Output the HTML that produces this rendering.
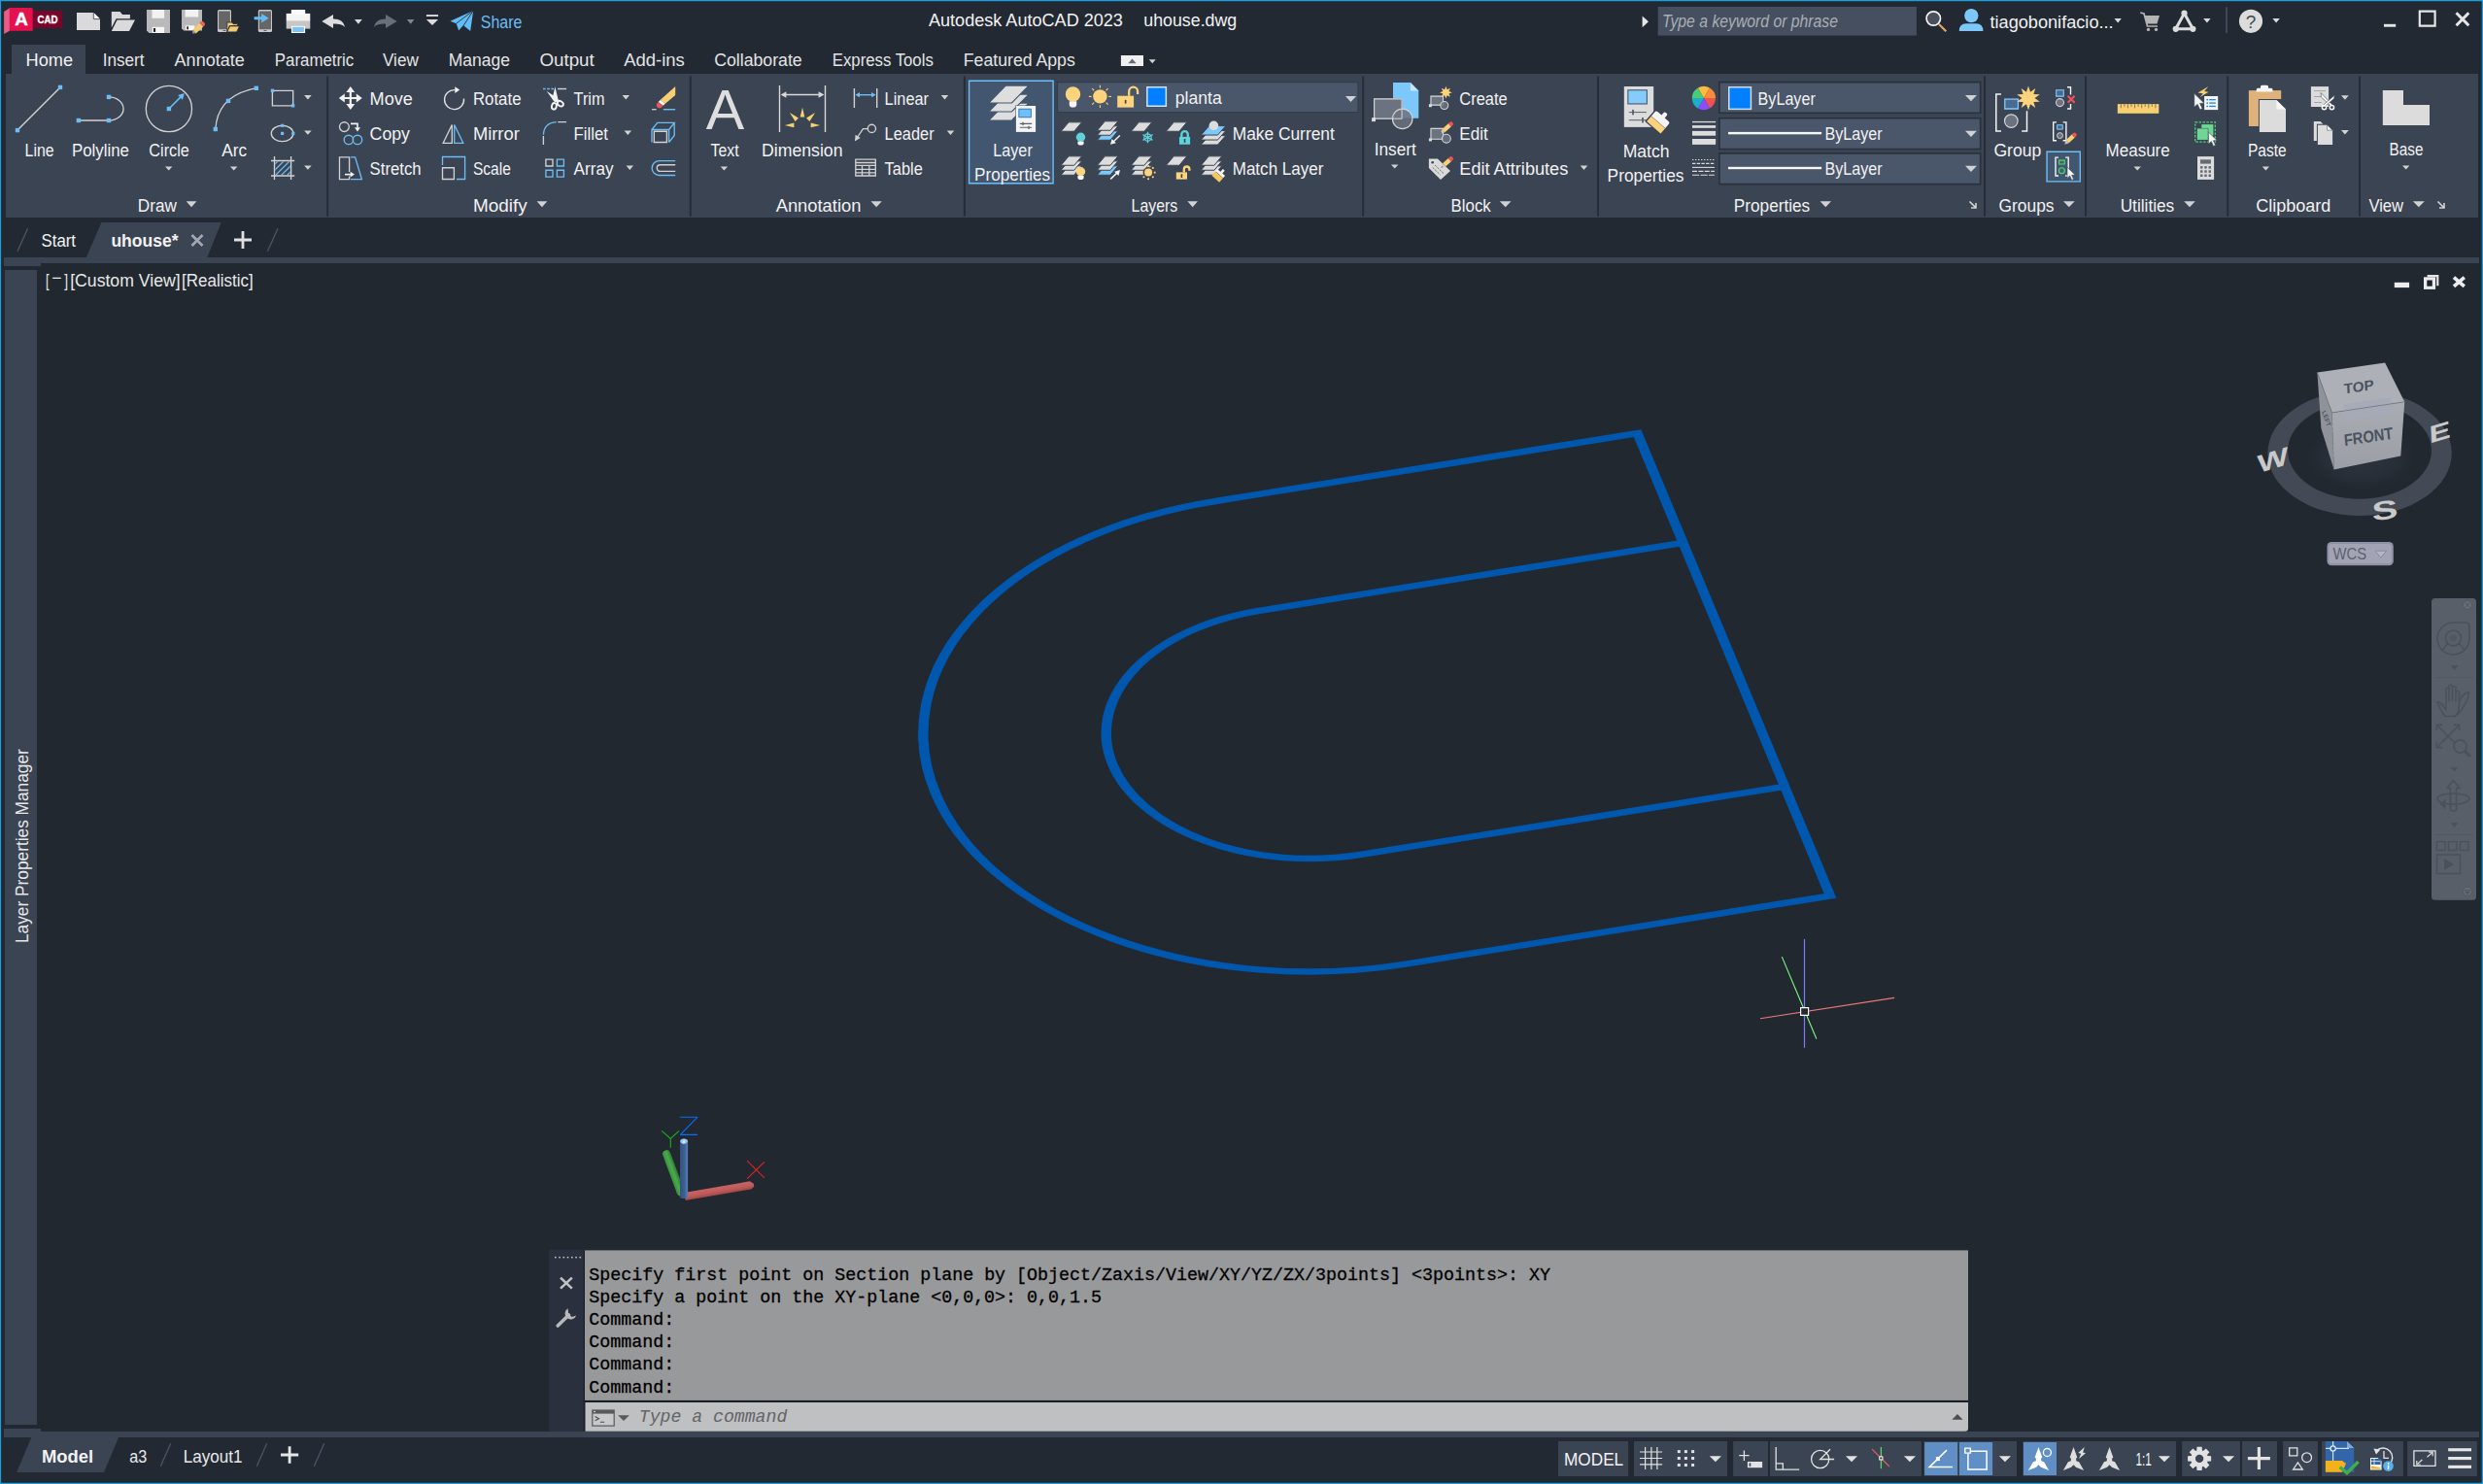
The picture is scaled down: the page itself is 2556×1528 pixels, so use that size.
<!DOCTYPE html>
<html><head><meta charset="utf-8"><title>Autodesk AutoCAD 2023 - uhouse.dwg</title>
<style>
html,body{margin:0;padding:0;background:#222933;width:2556px;height:1528px}
svg{display:block;font-family:"Liberation Sans", sans-serif;}
text{white-space:pre}
</style></head><body>
<svg width="2556" height="1528" viewBox="0 0 2556 1528">
<rect x="0" y="0" width="2556" height="1528" fill="#222933" />
<rect x="0" y="271" width="2556" height="1203" fill="#212830" />
<rect x="12" y="46" width="76" height="31" fill="#3b4453" />
<rect x="6" y="76" width="2545" height="148" fill="#3b4453" />
<rect x="4" y="265" width="2548" height="6" fill="#3b4453" />
<rect x="4" y="265" width="38" height="9" fill="#3b4453" />
<rect x="5" y="278" width="33" height="1189" fill="#3b4453" />
<rect x="4" y="1474" width="2548" height="6" fill="#3b4453" />
<rect x="4" y="1471" width="38" height="9" fill="#3b4453" />
<text x="494.8" y="28.8" font-size="17.5" fill="#6cbdf5" textLength="42.6" lengthAdjust="spacingAndGlyphs" >Share</text>
<text x="956" y="27.3" font-size="17.5" fill="#f2f2f2" textLength="199.9" lengthAdjust="spacingAndGlyphs" >Autodesk AutoCAD 2023</text>
<text x="1177.3" y="27.3" font-size="17.5" fill="#f2f2f2" textLength="95.9" lengthAdjust="spacingAndGlyphs" >uhouse.dwg</text>
<rect x="1706.7" y="7" width="266.2" height="29.6" fill="#464f5f" />
<text x="1711" y="28.2" font-size="17.5" fill="#a9aeb6" textLength="181" lengthAdjust="spacingAndGlyphs" font-style="italic" >Type a keyword or phrase</text>
<text x="2048.5" y="28.5" font-size="17.5" fill="#f2f2f2" textLength="127.1" lengthAdjust="spacingAndGlyphs" >tiagobonifacio...</text>
<path d="M4.1 12.1L9.9 8.2V31.7L4.1 35Z" fill="#ea5b86" />
<path d="M9.9 8H32.3Q33.8 8 33.8 9.5V31.7H9.9Z" fill="#e5114f" />
<rect x="33.8" y="11.1" width="30.2" height="17.7" fill="#79062a" />
<text x="15.3" y="26.4" font-size="18.5" fill="#ffffff" textLength="13.6" lengthAdjust="spacingAndGlyphs" font-weight="bold" stroke="#fff" stroke-width="0.4">A</text>
<text x="38.4" y="23.7" font-size="10.2" fill="#ffffff" textLength="21" lengthAdjust="spacingAndGlyphs" font-weight="bold" stroke="#fff" stroke-width="0.3">CAD</text>
<path d="M79 13H96.3L103 19.6V31H79Z" fill="#dadada" />
<path d="M96.3 13L103 19.6H96.3Z" fill="#f6f6f6" />
<path d="M96.3 13V19.6H103" fill="none" stroke="#222933" stroke-width="0.7" />
<path d="M114.8 12H123.5L126 15H133.9V19.2H119.6L114.8 28.5Z" fill="#dadada" />
<path d="M120.6 20.6H139L133 32H114.8Z" fill="#dadada" />
<path d="M151 10H175V34H153.5L151 31.5Z" fill="#b9b9b9" />
<rect x="156.5" y="10" width="12.6" height="8.8" fill="#f2f2f2" />
<rect x="156.7" y="27.8" width="12.4" height="6.2" fill="#f6f6f6" />
<rect x="158" y="29" width="2.1" height="3.9" fill="#222" />
<path d="M187 10H208V31.5H189.2L187 29.3Z" fill="#b9b9b9" />
<rect x="190.6" y="10" width="13.6" height="7.5" fill="#f2f2f2" />
<rect x="190.9" y="26.3" width="9.5" height="4.8" fill="#f6f6f6" />
<rect x="192.3" y="27.3" width="1.7" height="3" fill="#222" />
<path d="M205.2 23.8L209.2 27.6L202 34.2L198.6 33.6L198.8 30.3Z" fill="#f5ca72" />
<path d="M205.2 23.8L206.8 22.3Q208 21.3 209.5 22.6L210.6 23.8Q211.6 25.2 210.5 26.3L209.2 27.6Z" fill="#f0625c" />
<path d="M198.8 30.3L202 34.2L198 34.6Z" fill="#9a9a9a" />
<path d="M225.5 10H236.5Q238 10 238 11.5V31.5Q238 33 236.5 33H225.5Q224 33 224 31.5V11.5Q224 10 225.5 10Z" fill="#c9c9c9" />
<rect x="225.1" y="11.5" width="11.8" height="18.7" fill="#666666" />
<rect x="229.5" y="31" width="3" height="1" fill="#666" />
<path d="M233.8 23H238.8L240 24.6H244.6V26.6H236.3L233.8 32.9Z" fill="#f5ca72" stroke="#222933" stroke-width="0.8" />
<path d="M236.6 26.9H246.5L243.6 32.9H233.8Z" fill="#f5ca72" stroke="#222933" stroke-width="0.8" />
<path d="M267.3 10H278.5Q280 10 280 11.5V31.5Q280 33 278.5 33H267.3Q265.8 33 265.8 31.5V11.5Q265.8 10 267.3 10Z" fill="#c9c9c9" />
<rect x="266.9" y="11.5" width="12.1" height="18.7" fill="#666666" />
<rect x="271.5" y="31" width="3" height="1" fill="#666" />
<path d="M261.6 17.2H269.2V14L276.8 18.7L269.2 23.4V20.2H261.6Z" fill="#62bdf7" />
<rect x="299.9" y="10" width="14.2" height="7" fill="#fafafa" />
<rect x="294.7" y="13.9" width="24.6" height="8" fill="#f4f4f4" />
<rect x="294.7" y="21.7" width="24.6" height="7.9" fill="#c6c6c6" />
<rect x="299.9" y="10" width="14.2" height="5" fill="#fafafa" />
<rect x="299.9" y="26.8" width="14.2" height="7.2" fill="#fafafa" />
<rect x="301.1" y="27.8" width="11.8" height="5.2" fill="#7cc4f8" />
<path d="M331.3 22.1L343 15.1V19.6Q353 19.3 355.2 27.9Q351 24.3 343 24.6V29Z" fill="#dcdcdc" />
<path d="M365 19.9H372.8L368.9 24.8Z" fill="#dcdcdc" />
<path d="M408.7 22.1L397 15.1V19.6Q387 19.3 384.8 27.9Q389 24.3 397 24.6V29Z" fill="#696e78" />
<path d="M418.9 19.9H426.5L422.7 24.8Z" fill="#80858e" />
<rect x="438.9" y="15.1" width="12.2" height="1.9" fill="#dcdcdc" />
<path d="M438.9 19.9H451.1L445 26.1Z" fill="#dcdcdc" />
<path d="M463.4 21.7L487.2 10.9L484.2 32L477.2 26.3L472.3 31.7L469.7 24.2Z" fill="#62bdf7" />
<path d="M487.2 10.9L469.7 24.2M487.2 10.9L477.2 26.3L472.3 31.7" fill="none" stroke="#222933" stroke-width="0.9" />
<path d="M1690.6 16.4L1697 22.3L1690.6 28.2Z" fill="#e6e6e6" />
<circle cx="1990.3" cy="19" r="7.2" fill="#4a505c" stroke="#f4f4f4" stroke-width="1.7"/>
<path d="M1996 25L2003.3 32.2" fill="none" stroke="#e3a566" stroke-width="2.2" />
<circle cx="2029.3" cy="16.1" r="7.2" fill="#7cc8fb"/>
<path d="M2016.8 31.9Q2016.8 24.2 2024 24.2H2034.4Q2041.4 24.2 2041.4 31.9Z" fill="#7cc8fb" />
<path d="M2176.5 19H2183.9L2180.2 23.4Z" fill="#dcdcdc" />
<path d="M2203.2 13L2207 14L2210.5 27H2221" fill="none" stroke="#b4b4b4" stroke-width="1.7" />
<path d="M2207.6 16H2223L2220.5 24.5H2210Z" fill="#b4b4b4" />
<circle cx="2211.5" cy="30.4" r="1.7" fill="#b4b4b4"/><circle cx="2219.5" cy="30.4" r="1.7" fill="#b4b4b4"/>
<path d="M2248.5 13.7L2239.7 29.8H2257.4Z" fill="none" stroke="#dcdcdc" stroke-width="3" stroke-linejoin="round"/>
<circle cx="2248.5" cy="13.7" r="3.1" fill="#dcdcdc"/>
<circle cx="2239.7" cy="29.8" r="3.1" fill="#dcdcdc"/>
<circle cx="2257.4" cy="29.8" r="3.1" fill="#dcdcdc"/>
<path d="M2268.2 19H2275.6L2271.9 23.4Z" fill="#dcdcdc" />
<rect x="2291" y="7.3" width="2" height="26.6" fill="#3d4759" />
<circle cx="2317" cy="21.8" r="12.1" fill="#dcdcdc"/>
<text x="2317" y="28.6" font-size="19" fill="#444a55" text-anchor="middle" >?</text>
<path d="M2339.4 19H2346.8L2343.1 23.4Z" fill="#dcdcdc" />
<rect x="2454" y="24.8" width="12.2" height="2.9" fill="#e6e6e6" />
<path d="M2490.8 11.7H2506.6V26.6H2490.8Z" fill="none" stroke="#e6e6e6" stroke-width="2.2" />
<path d="M2528.5 13.2L2541.3 26.2M2541.3 13.2L2528.5 26.2" fill="none" stroke="#e6e6e6" stroke-width="3" />
<text x="26.5" y="67.8" font-size="17.5" fill="#f2f2f2" textLength="48.5" lengthAdjust="spacingAndGlyphs" >Home</text>
<text x="105.7" y="67.8" font-size="17.5" fill="#e4e4e4" textLength="42.9" lengthAdjust="spacingAndGlyphs" >Insert</text>
<text x="179.6" y="67.8" font-size="17.5" fill="#e4e4e4" textLength="72.2" lengthAdjust="spacingAndGlyphs" >Annotate</text>
<text x="282.8" y="67.8" font-size="17.5" fill="#e4e4e4" textLength="81.5" lengthAdjust="spacingAndGlyphs" >Parametric</text>
<text x="394" y="67.8" font-size="17.5" fill="#e4e4e4" textLength="36.8" lengthAdjust="spacingAndGlyphs" >View</text>
<text x="461.8" y="67.8" font-size="17.5" fill="#e4e4e4" textLength="63.2" lengthAdjust="spacingAndGlyphs" >Manage</text>
<text x="555.4" y="67.8" font-size="17.5" fill="#e4e4e4" textLength="56.4" lengthAdjust="spacingAndGlyphs" >Output</text>
<text x="642.2" y="67.8" font-size="17.5" fill="#e4e4e4" textLength="62.6" lengthAdjust="spacingAndGlyphs" >Add-ins</text>
<text x="735.2" y="67.8" font-size="17.5" fill="#e4e4e4" textLength="90.5" lengthAdjust="spacingAndGlyphs" >Collaborate</text>
<text x="856.8" y="67.8" font-size="17.5" fill="#e4e4e4" textLength="104" lengthAdjust="spacingAndGlyphs" >Express Tools</text>
<text x="991.8" y="67.8" font-size="17.5" fill="#e4e4e4" textLength="115" lengthAdjust="spacingAndGlyphs" >Featured Apps</text>
<rect x="1153.9" y="57" width="23.1" height="11" fill="#f0f0f0" />
<path d="M1161.3 65.2H1169.7L1165.5 60.4Z" fill="#666b74" />
<path d="M1182.7 61.2H1189.7L1186.2 65.2Z" fill="#d2d2d2" />
<rect x="336.2" y="78.4" width="1.9" height="144.4" fill="#252c37" />
<rect x="709.8" y="78.4" width="1.9" height="144.4" fill="#252c37" />
<rect x="991.9" y="78.4" width="1.9" height="144.4" fill="#252c37" />
<rect x="1402.2" y="78.4" width="1.9" height="144.4" fill="#252c37" />
<rect x="1644.1" y="78.4" width="1.9" height="144.4" fill="#252c37" />
<rect x="2042.1" y="78.4" width="1.9" height="144.4" fill="#252c37" />
<rect x="2146.1" y="78.4" width="1.9" height="144.4" fill="#252c37" />
<rect x="2292.3" y="78.4" width="1.9" height="144.4" fill="#252c37" />
<rect x="2428.1" y="78.4" width="1.9" height="144.4" fill="#252c37" />
<rect x="1088.5" y="84.6" width="309.5" height="31" fill="#4a566a" />
<path d="M1088.5 84.6H1398V115.6H1088.5Z" fill="none" stroke="#343c4a" stroke-width="1.2" />
<path d="M1385 99H1396L1390.5 105Z" fill="#d2d2d2" />
<rect x="1769.9" y="84.6" width="268.7" height="31.7" fill="#4a566a" />
<path d="M1769.9 84.6H2038.6V116.3H1769.9Z" fill="none" stroke="#2a313d" stroke-width="1.6" />
<rect x="1769.9" y="121.8" width="268.7" height="31.7" fill="#4a566a" />
<path d="M1769.9 121.8H2038.6V153.5H1769.9Z" fill="none" stroke="#2a313d" stroke-width="1.6" />
<rect x="1769.9" y="157.9" width="268.7" height="31.7" fill="#4a566a" />
<path d="M1769.9 157.9H2038.6V189.6H1769.9Z" fill="none" stroke="#2a313d" stroke-width="1.6" />
<path d="M2023 98H2034.9L2028.95 104.2Z" fill="#d2d2d2" />
<path d="M2023 134.8H2034.9L2028.95 141Z" fill="#d2d2d2" />
<path d="M2023 170.8H2034.9L2028.95 177Z" fill="#d2d2d2" />
<rect x="1779" y="89" width="24.2" height="24.1" fill="#d4dae4" />
<rect x="1780.5" y="90.5" width="21.2" height="21.1" fill="#0080ff" />
<rect x="1779" y="135.9" width="96.1" height="2.4" fill="#f6f6f6" />
<rect x="1779" y="171.8" width="96.1" height="2.4" fill="#f6f6f6" />
<rect x="996.9" y="82.6" width="87.9" height="106.9" fill="#43566f" />
<path d="M997.6 83.3H1084.1V188.8H997.6Z" fill="none" stroke="#6cbdf5" stroke-width="1.4" />
<text x="141.8" y="217.6" font-size="17.5" fill="#f2f2f2" textLength="40" lengthAdjust="spacingAndGlyphs" >Draw</text>
<path d="M191.7 207.3H202.4L197.05 213.3Z" fill="#d2d2d2" />
<text x="486.9" y="217.6" font-size="17.5" fill="#f2f2f2" textLength="55.8" lengthAdjust="spacingAndGlyphs" >Modify</text>
<path d="M552.6 207.3H563.3L557.95 213.3Z" fill="#d2d2d2" />
<text x="798.7" y="217.6" font-size="17.5" fill="#f2f2f2" textLength="87.7" lengthAdjust="spacingAndGlyphs" >Annotation</text>
<path d="M896.5 207.3H907.8L902.15 213.3Z" fill="#d2d2d2" />
<text x="1164.6" y="217.6" font-size="17.5" fill="#f2f2f2" textLength="47.7" lengthAdjust="spacingAndGlyphs" >Layers</text>
<path d="M1222.4 207.3H1233L1227.7 213.3Z" fill="#d2d2d2" />
<text x="1493.6" y="217.6" font-size="17.5" fill="#f2f2f2" textLength="41.2" lengthAdjust="spacingAndGlyphs" >Block</text>
<path d="M1543.8 207.3H1555.6L1549.7 213.3Z" fill="#d2d2d2" />
<text x="1784.8" y="217.6" font-size="17.5" fill="#f2f2f2" textLength="78.4" lengthAdjust="spacingAndGlyphs" >Properties</text>
<path d="M1873.6 207.3H1885L1879.3 213.3Z" fill="#d2d2d2" />
<text x="2057.5" y="217.6" font-size="17.5" fill="#f2f2f2" textLength="57" lengthAdjust="spacingAndGlyphs" >Groups</text>
<path d="M2124 207.3H2135.7L2129.85 213.3Z" fill="#d2d2d2" />
<text x="2182.7" y="217.6" font-size="17.5" fill="#f2f2f2" textLength="55.5" lengthAdjust="spacingAndGlyphs" >Utilities</text>
<path d="M2248.2 207.3H2259.8L2254 213.3Z" fill="#d2d2d2" />
<text x="2322.2" y="217.6" font-size="17.5" fill="#f2f2f2" textLength="77.1" lengthAdjust="spacingAndGlyphs" >Clipboard</text>
<text x="2438.4" y="217.6" font-size="17.5" fill="#f2f2f2" textLength="35.7" lengthAdjust="spacingAndGlyphs" >View</text>
<path d="M2483.9 207.3H2495.8L2489.85 213.3Z" fill="#d2d2d2" />
<path d="M2027.5 207.5L2034.0 214M2029.0 214H2034.0V209" fill="none" stroke="#d2d2d2" stroke-width="1.6" />
<path d="M2509.5 207.5L2516.0 214M2511.0 214H2516.0V209" fill="none" stroke="#d2d2d2" stroke-width="1.6" />
<text x="25.6" y="161" font-size="17.5" fill="#f2f2f2" textLength="30" lengthAdjust="spacingAndGlyphs" >Line</text>
<text x="73.9" y="161" font-size="17.5" fill="#f2f2f2" textLength="59.1" lengthAdjust="spacingAndGlyphs" >Polyline</text>
<text x="153.3" y="161" font-size="17.5" fill="#f2f2f2" textLength="41.5" lengthAdjust="spacingAndGlyphs" >Circle</text>
<text x="228.2" y="161" font-size="17.5" fill="#f2f2f2" textLength="25.8" lengthAdjust="spacingAndGlyphs" >Arc</text>
<path d="M170 171.4H177.4L173.7 175.4Z" fill="#d2d2d2" />
<path d="M237 171.4H244.4L240.7 175.4Z" fill="#d2d2d2" />
<path d="M313.1 98.1H320.7L316.9 102.5Z" fill="#d2d2d2" />
<path d="M313.1 134.4H320.7L316.9 138.8Z" fill="#d2d2d2" />
<path d="M313.1 170.4H320.7L316.9 174.8Z" fill="#d2d2d2" />
<text x="380.6" y="107.8" font-size="17.5" fill="#f2f2f2" textLength="44.3" lengthAdjust="spacingAndGlyphs" >Move</text>
<text x="380.6" y="143.9" font-size="17.5" fill="#f2f2f2" textLength="41.4" lengthAdjust="spacingAndGlyphs" >Copy</text>
<text x="380.6" y="179.8" font-size="17.5" fill="#f2f2f2" textLength="53" lengthAdjust="spacingAndGlyphs" >Stretch</text>
<text x="486.9" y="107.8" font-size="17.5" fill="#f2f2f2" textLength="49.6" lengthAdjust="spacingAndGlyphs" >Rotate</text>
<text x="486.9" y="143.9" font-size="17.5" fill="#f2f2f2" textLength="47.9" lengthAdjust="spacingAndGlyphs" >Mirror</text>
<text x="486.9" y="179.8" font-size="17.5" fill="#f2f2f2" textLength="38.9" lengthAdjust="spacingAndGlyphs" >Scale</text>
<text x="590.6" y="107.8" font-size="17.5" fill="#f2f2f2" textLength="31.9" lengthAdjust="spacingAndGlyphs" >Trim</text>
<text x="590.6" y="143.9" font-size="17.5" fill="#f2f2f2" textLength="35.3" lengthAdjust="spacingAndGlyphs" >Fillet</text>
<text x="590.6" y="179.8" font-size="17.5" fill="#f2f2f2" textLength="40.9" lengthAdjust="spacingAndGlyphs" >Array</text>
<path d="M640.55 98H648.05L644.3 102.4Z" fill="#d2d2d2" />
<path d="M642.55 134.5H650.05L646.3 138.9Z" fill="#d2d2d2" />
<path d="M644.55 170.5H652.05L648.3 174.9Z" fill="#d2d2d2" />
<text x="731.6" y="161" font-size="17.5" fill="#f2f2f2" textLength="29" lengthAdjust="spacingAndGlyphs" >Text</text>
<text x="784" y="161" font-size="17.5" fill="#f2f2f2" textLength="83.5" lengthAdjust="spacingAndGlyphs" >Dimension</text>
<path d="M741.7 171.4H749.1L745.4 175.4Z" fill="#d2d2d2" />
<text x="910.6" y="107.8" font-size="17.5" fill="#f2f2f2" textLength="45.4" lengthAdjust="spacingAndGlyphs" >Linear</text>
<text x="910.6" y="143.9" font-size="17.5" fill="#f2f2f2" textLength="51" lengthAdjust="spacingAndGlyphs" >Leader</text>
<text x="910.6" y="179.8" font-size="17.5" fill="#f2f2f2" textLength="39.2" lengthAdjust="spacingAndGlyphs" >Table</text>
<path d="M968.75 98H976.25L972.5 102.4Z" fill="#d2d2d2" />
<path d="M974.75 134.5H982.25L978.5 138.9Z" fill="#d2d2d2" />
<text x="1022.2" y="161" font-size="17.5" fill="#f2f2f2" textLength="40.6" lengthAdjust="spacingAndGlyphs" >Layer</text>
<text x="1003" y="186" font-size="17.5" fill="#f2f2f2" textLength="78.2" lengthAdjust="spacingAndGlyphs" >Properties</text>
<text x="1209.8" y="106.8" font-size="17.5" fill="#f2f2f2" textLength="47.9" lengthAdjust="spacingAndGlyphs" >planta</text>
<text x="1268.7" y="143.9" font-size="17.5" fill="#f2f2f2" textLength="105.1" lengthAdjust="spacingAndGlyphs" >Make Current</text>
<text x="1268.7" y="179.8" font-size="17.5" fill="#f2f2f2" textLength="93.8" lengthAdjust="spacingAndGlyphs" >Match Layer</text>
<text x="1414.7" y="159.5" font-size="17.5" fill="#f2f2f2" textLength="43.1" lengthAdjust="spacingAndGlyphs" >Insert</text>
<path d="M1432 169.5H1439.4L1435.7 173.5Z" fill="#d2d2d2" />
<text x="1502.3" y="107.8" font-size="17.5" fill="#f2f2f2" textLength="49.4" lengthAdjust="spacingAndGlyphs" >Create</text>
<text x="1502.3" y="143.9" font-size="17.5" fill="#f2f2f2" textLength="29.4" lengthAdjust="spacingAndGlyphs" >Edit</text>
<text x="1502.3" y="179.8" font-size="17.5" fill="#f2f2f2" textLength="112" lengthAdjust="spacingAndGlyphs" >Edit Attributes</text>
<path d="M1626.75 170.5H1634.25L1630.5 174.9Z" fill="#d2d2d2" />
<text x="1670.7" y="162" font-size="17.5" fill="#f2f2f2" textLength="47.9" lengthAdjust="spacingAndGlyphs" >Match</text>
<text x="1654.6" y="186.9" font-size="17.5" fill="#f2f2f2" textLength="78.9" lengthAdjust="spacingAndGlyphs" >Properties</text>
<text x="1809.6" y="108" font-size="17.5" fill="#f2f2f2" textLength="59.2" lengthAdjust="spacingAndGlyphs" >ByLayer</text>
<text x="1878.4" y="144.2" font-size="17.5" fill="#f2f2f2" textLength="59.2" lengthAdjust="spacingAndGlyphs" >ByLayer</text>
<text x="1878.4" y="180.3" font-size="17.5" fill="#f2f2f2" textLength="59.2" lengthAdjust="spacingAndGlyphs" >ByLayer</text>
<text x="2052.4" y="160.6" font-size="17.5" fill="#f2f2f2" textLength="48.9" lengthAdjust="spacingAndGlyphs" >Group</text>
<text x="2167.6" y="160.6" font-size="17.5" fill="#f2f2f2" textLength="66.1" lengthAdjust="spacingAndGlyphs" >Measure</text>
<path d="M2196.5 171.4H2203.9L2200.2 175.4Z" fill="#d2d2d2" />
<text x="2314" y="160.6" font-size="17.5" fill="#f2f2f2" textLength="39.6" lengthAdjust="spacingAndGlyphs" >Paste</text>
<path d="M2328.7 171.4H2336.1L2332.4 175.4Z" fill="#d2d2d2" />
<text x="2459.6" y="160.2" font-size="17.5" fill="#f2f2f2" textLength="34.9" lengthAdjust="spacingAndGlyphs" >Base</text>
<path d="M2473 170.6H2480.4L2476.7 174.6Z" fill="#d2d2d2" />
<path d="M18 134.1L62 89.9" fill="none" stroke="#d2d2d2" stroke-width="1.35" />
<rect x="15.8" y="131.9" width="4.4" height="4.4" fill="#6cbdf5" />
<rect x="59.8" y="87.7" width="4.4" height="4.4" fill="#6cbdf5" />
<path d="M80.9 124H112A15 12 0 0 0 112 99.9" fill="none" stroke="#d2d2d2" stroke-width="1.35" />
<rect x="78.7" y="121.8" width="4.4" height="4.4" fill="#6cbdf5" />
<rect x="109.8" y="121.8" width="4.4" height="4.4" fill="#6cbdf5" />
<rect x="109.8" y="97.7" width="4.4" height="4.4" fill="#6cbdf5" />
<circle cx="173.9" cy="112" r="23.6" fill="none" stroke="#d2d2d2" stroke-width="1.35"/>
<path d="M173.9 112L186.5 99.4" fill="none" stroke="#6cbdf5" stroke-width="1.6" />
<path d="M189.8 96.1L187.962 102.747L183.153 97.9385Z" fill="#6cbdf5" />
<rect x="171.7" y="109.8" width="4.4" height="4.4" fill="#6cbdf5" />
<path d="M221.8 133Q224 98 263.8 90.8" fill="none" stroke="#d2d2d2" stroke-width="1.35" />
<rect x="219.6" y="130.8" width="4.4" height="4.4" fill="#6cbdf5" />
<rect x="232.8" y="101.7" width="4.4" height="4.4" fill="#6cbdf5" />
<rect x="261.6" y="88.6" width="4.4" height="4.4" fill="#6cbdf5" />
<path d="M280.4 93.3H301.7V108.8H280.4Z" fill="none" stroke="#d2d2d2" stroke-width="1.35" />
<rect x="278.8" y="91.6" width="3.4" height="3.4" fill="#6cbdf5" />
<rect x="299.9" y="107.1" width="3.4" height="3.4" fill="#6cbdf5" />
<ellipse cx="290.6" cy="137.4" rx="11.3" ry="8.2" fill="none" stroke="#d2d2d2" stroke-width="1.35"/>
<rect x="289" y="127.7" width="3.2" height="3.2" fill="#6cbdf5" />
<rect x="289" y="135.8" width="3.2" height="3.2" fill="#6cbdf5" />
<rect x="300.2" y="135.8" width="3.2" height="3.2" fill="#6cbdf5" />
<clipPath id="hc"><rect x="283.4" y="166.4" width="15.3" height="13.7"/></clipPath>
<path d="M279 173L292 160M279 179L298 160M279 185L304 160M285 185L304 166M291 185L304 172" fill="none" stroke="#6cbdf5" stroke-width="1.3" clip-path="url(#hc)"/>
<path d="M279 165.5H303.2M279 181H303.2M282.5 161.1V185M299.6 161.1V185" fill="none" stroke="#d2d2d2" stroke-width="1.35" />
<path d="M360.8 92V110M352 101H369.6" fill="none" stroke="#f2f2f2" stroke-width="2.2" />
<path d="M360.8 89L365.2 95L356.4 95Z" fill="#f2f2f2" />
<path d="M360.8 113L356.4 107L365.2 107Z" fill="#f2f2f2" />
<path d="M348.8 101L354.8 96.6L354.8 105.4Z" fill="#f2f2f2" />
<path d="M372.8 101L366.8 105.4L366.8 96.6Z" fill="#f2f2f2" />
<circle cx="354.4" cy="130.6" r="4.9" fill="none" stroke="#d2d2d2" stroke-width="1.35"/>
<circle cx="358.9" cy="143.9" r="4.7" fill="none" stroke="#6cbdf5" stroke-width="1.35"/>
<circle cx="368" cy="143.9" r="4.7" fill="none" stroke="#6cbdf5" stroke-width="1.35"/>
<path d="M361 127.4H368V131.5" fill="none" stroke="#f2f2f2" stroke-width="1.6" />
<path d="M368 135.6L365 131.2L371 131.2Z" fill="#f2f2f2" />
<path d="M359.6 177V161.8H349.5V184.6H359.6V181.5" fill="none" stroke="#d2d2d2" stroke-width="1.35" />
<path d="M361 161.8H365.6L372.4 184.6H361" fill="none" stroke="#6cbdf5" stroke-width="1.35" />
<path d="M355 179.6H361" fill="none" stroke="#f2f2f2" stroke-width="1.6" />
<path d="M365 179.6L360.6 182.4L360.6 176.8Z" fill="#f2f2f2" />
<path d="M468.2 92.6A10 10 0 1 0 477.5 101.5" fill="none" stroke="#e2e2e2" stroke-width="1.35" />
<path d="M468.3 89.2L473.2 92.6L468.3 96Z" fill="#f2f2f2" />
<path d="M465.3 128.5V147.3H456.2Z" fill="none" stroke="#d2d2d2" stroke-width="1.35" />
<path d="M467.7 128.5V147.3H476.8Z" fill="none" stroke="#6cbdf5" stroke-width="1.35" />
<path d="M455.5 170V161.5H478.6V184.5H470" fill="none" stroke="#6cbdf5" stroke-width="1.35" />
<path d="M455.5 172.7H467.4V184.5H455.5Z" fill="none" stroke="#d2d2d2" stroke-width="1.35" />
<path d="M559 91.5H570" fill="none" stroke="#6cbdf5" stroke-width="1.4" stroke-dasharray="2.6 1.6"/>
<path d="M574 91.5H583.1" fill="none" stroke="#d2d2d2" stroke-width="1.4" />
<path d="M571.4 89.2L574.2 101L571.6 105.6L568.6 101.6Z" fill="#f2f2f2" />
<path d="M562.6 93.8L574.4 101.6L575.6 105.4L570.4 104.6Z" fill="#f2f2f2" />
<ellipse cx="570.4" cy="109.3" rx="2.4" ry="3.3" fill="none" stroke="#f2f2f2" stroke-width="1.9" transform="rotate(15 570.4 109.3)"/>
<ellipse cx="576.8" cy="106.7" rx="2.4" ry="3.3" fill="none" stroke="#f2f2f2" stroke-width="1.9" transform="rotate(-55 576.8 106.7)"/>
<path d="M559.4 138.7Q560 126.5 572.7 125.6" fill="none" stroke="#6cbdf5" stroke-width="1.35" />
<path d="M574.3 125.6H583.1M559.4 139.9V148.9" fill="none" stroke="#d2d2d2" stroke-width="1.35" />
<path d="M561.9 164.1H569V171H561.9Z" fill="none" stroke="#d2d2d2" stroke-width="1.35" />
<path d="M573.4 164.1H580.4V171H573.4ZM561.9 175.2H569V182.1H561.9ZM573.4 175.2H580.4V182.1H573.4Z" fill="none" stroke="#6cbdf5" stroke-width="1.35" />
<path d="M695.2 89V98.1L684.8 106.8L679.6 103.1Z" fill="#f8cf72" />
<path d="M679.6 103.1L684.8 106.8L682.6 108.7L677.6 105Z" fill="#fafafa" />
<path d="M677.6 105L682.6 108.7Q680 112.6 677 110.8Q674.2 108.5 677.6 105Z" fill="#f0525a" />
<path d="M671.1 112.7H675.6" fill="none" stroke="#d2d2d2" stroke-width="1.3" />
<path d="M682.9 112.7H695.2" fill="none" stroke="#6cbdf5" stroke-width="1.4" />
<path d="M671 146.6V133.5H688.6V146.6M671 133.5L676.7 126.3H694.2L688.6 133.5M694.2 126.3V139.4L688.6 146.6" fill="none" stroke="#6cbdf5" stroke-width="1.35" />
<path d="M673.3 135.2H686.4V146.5H673.3Z" fill="none" stroke="#d2d2d2" stroke-width="1.35" />
<path d="M695.2 165.6H678.6A7.45 7.45 0 0 0 678.6 180.5H695.2" fill="none" stroke="#6cbdf5" stroke-width="1.35" />
<path d="M695.2 169.7H679.6A3.35 3.35 0 0 0 679.6 176.4H695.2" fill="none" stroke="#d2d2d2" stroke-width="1.35" />
<text x="746.4" y="133" font-size="58" fill="#dedede" textLength="39.4" lengthAdjust="spacingAndGlyphs" text-anchor="middle" >A</text>
<path d="M802.5 88.1V135.9M849.5 88.1V135.9M808 97.5H844" fill="none" stroke="#d8d8d8" stroke-width="1.4" />
<path d="M803.6 97.5L809.4 94.3L809.4 100.7Z" fill="#d8d8d8" />
<path d="M848.4 97.5L842.6 100.7L842.6 94.3Z" fill="#d8d8d8" />
<path d="M826 110.8L828.3 120.4H823.7Z" fill="#f8d272" />
<path d="M812.9 116L822 121.4L818.6 124.9Z" fill="#f8d272" />
<path d="M839.1 116L830 121.4L833.4 124.9Z" fill="#f8d272" />
<path d="M807.9 128.9L817.4 126.6V131.2Z" fill="#f8d272" />
<path d="M844.1 128.9L834.6 126.6V131.2Z" fill="#f8d272" />
<path d="M879.4 91V111M902.7 91V111" fill="none" stroke="#d2d2d2" stroke-width="1.4" />
<path d="M883 97.7H899" fill="none" stroke="#6cbdf5" stroke-width="1.4" />
<path d="M880.4 97.7L885 95.1L885 100.3Z" fill="#6cbdf5" />
<path d="M901.7 97.7L897.1 100.3L897.1 95.1Z" fill="#6cbdf5" />
<circle cx="897.4" cy="132.4" r="4.1" fill="none" stroke="#d2d2d2" stroke-width="1.35"/>
<path d="M893.2 132.6H888.4L882.5 141.5" fill="none" stroke="#d2d2d2" stroke-width="1.35" />
<path d="M879.9 145.5L880.656 138.837L885.684 142.107Z" fill="#d2d2d2" />
<path d="M880.8 164.1H901.3V181H880.8ZM880.8 167.5H901.3M880.8 170.3H901.3M880.8 174.3H901.3M880.8 177.8H901.3M887.5 170.3V181M894.8 170.3V181" fill="none" stroke="#d2d2d2" stroke-width="1.3" />
<path d="M1035.3 106.1H1059L1041.5 124H1017.8Z" fill="#dedede" stroke="#43566f" stroke-width="1.1" />
<path d="M1035.3 97.1H1059L1041.5 115H1017.8Z" fill="#dedede" stroke="#43566f" stroke-width="1.1" />
<path d="M1035.3 88.1H1059L1041.5 106H1017.8Z" fill="#dedede" stroke="#43566f" stroke-width="1.1" />
<rect x="1045.4" y="108.5" width="21.2" height="27.9" fill="#43566f" />
<rect x="1045.9" y="109" width="20.2" height="26.9" fill="#f4f4f4" />
<rect x="1048.4" y="111.8" width="13.5" height="9.4" fill="#6cc0fb" />
<path d="M1048.9 112.3H1061.4V120.7H1048.9Z" fill="none" stroke="#4a7fb0" stroke-width="1" />
<path d="M1049.8 127.4H1062.2M1049.8 131.3H1062.2" fill="none" stroke="#5a5f68" stroke-width="1.1" />
<path d="M1053 125.8V129M1059 129.7V132.9" fill="none" stroke="#5a5f68" stroke-width="1.3" />
<circle cx="1104.5" cy="97" r="7.7" fill="#fdd37c"/>
<path d="M1100.75 104.3H1108.25V107.45Q1108.25 110.6 1104.5 110.6Q1100.75 110.6 1100.75 107.45Z" fill="#f6f6f6" />
<circle cx="1132.4" cy="99.4" r="7.2" fill="#fdd37c"/>
<path d="M1141.20 99.40L1144.00 99.40" fill="none" stroke="#fdd37c" stroke-width="1.1" />
<path d="M1138.62 105.62L1140.60 107.60" fill="none" stroke="#fdd37c" stroke-width="1.1" />
<path d="M1132.40 108.20L1132.40 111.00" fill="none" stroke="#fdd37c" stroke-width="1.1" />
<path d="M1126.18 105.62L1124.20 107.60" fill="none" stroke="#fdd37c" stroke-width="1.1" />
<path d="M1123.60 99.40L1120.80 99.40" fill="none" stroke="#fdd37c" stroke-width="1.1" />
<path d="M1126.18 93.18L1124.20 91.20" fill="none" stroke="#fdd37c" stroke-width="1.1" />
<path d="M1132.40 90.60L1132.40 87.80" fill="none" stroke="#fdd37c" stroke-width="1.1" />
<path d="M1138.62 93.18L1140.60 91.20" fill="none" stroke="#fdd37c" stroke-width="1.1" />
<rect x="1150.2" y="98.7" width="16.9" height="11.9" fill="#fdd37c" />
<path d="M1162.2 98.7V94.15A4.45 4.45 0 0 1 1171.1 94.15V97.1" fill="none" stroke="#fdd37c" stroke-width="2.3" />
<rect x="1157.85" y="102.85" width="1.6" height="3.8" fill="#39414f" />
<rect x="1180.1" y="89" width="21" height="21" fill="#d6e2f2" />
<rect x="1181.6" y="90.5" width="18" height="18" fill="#0080ff" />
<path d="M1092.2 135.25L1100.1 125.85H1113.6L1105.7 135.25Z" fill="#dcdcdc" stroke="#3b4453" stroke-width="1" />
<circle cx="1112.5" cy="141.2" r="4.7" fill="#5fd3dc"/>
<path d="M1109.4 145.5H1115.6V147.5Q1115.6 149.5 1112.5 149.5Q1109.4 149.5 1109.4 147.5Z" fill="#f6f6f6" />
<path d="M1129.5 144.25L1137.4 134.85H1150.9L1143 144.25Z" fill="#7cc8fb" stroke="#3b4453" stroke-width="1" />
<path d="M1129.5 139.25L1137.4 129.85H1150.9L1143 139.25Z" fill="#dcdcdc" stroke="#3b4453" stroke-width="1" />
<path d="M1129.5 134.25L1137.4 124.85H1150.9L1143 134.25Z" fill="#dcdcdc" stroke="#3b4453" stroke-width="1" />
<path d="M1152.8 139.5L1146 146" fill="none" stroke="#f2f2f2" stroke-width="1.5" />
<path d="M1143 148.8L1144.56 143.002L1148.8 147.244Z" fill="#f2f2f2" />
<path d="M1164.4 135.25L1172.3 125.85H1185.8L1177.9 135.25Z" fill="#dcdcdc" stroke="#3b4453" stroke-width="1" />
<path d="M1181.50 135.70L1181.50 147.30" fill="none" stroke="#5fd3dc" stroke-width="1.25" />
<path d="M1186.52 138.60L1176.48 144.40" fill="none" stroke="#5fd3dc" stroke-width="1.25" />
<path d="M1186.52 144.40L1176.48 138.60" fill="none" stroke="#5fd3dc" stroke-width="1.25" />
<circle cx="1181.5" cy="141.5" r="3.7" fill="none" stroke="#5fd3dc" stroke-width="1.2"/>
<path d="M1200.4 135.25L1208.3 125.85H1221.8L1213.9 135.25Z" fill="#dcdcdc" stroke="#3b4453" stroke-width="1" />
<rect x="1214" y="140.9" width="11.1" height="7.8" fill="#5fd3dc" />
<path d="M1216.3 140.9V138.45A3.25 3.25 0 0 1 1222.8 138.45V140.9" fill="none" stroke="#5fd3dc" stroke-width="2.3" />
<rect x="1218.75" y="143" width="1.6" height="3.8" fill="#39414f" />
<path d="M1236.4 149.05L1244.7 139.55H1261.8L1253.5 149.05Z" fill="#dcdcdc" stroke="#3b4453" stroke-width="1" />
<path d="M1236.4 144.05L1244.7 134.55H1261.8L1253.5 144.05Z" fill="#dcdcdc" stroke="#3b4453" stroke-width="1" />
<path d="M1236.4 139.05L1244.7 129.55H1261.8L1253.5 139.05Z" fill="#7cc8fb" stroke="#3b4453" stroke-width="1" />
<circle cx="1249.4" cy="129.3" r="4.8" fill="#dcdcdc"/>
<path d="M1092.2 180.25L1100.1 170.85H1113.6L1105.7 180.25Z" fill="#dcdcdc" stroke="#3b4453" stroke-width="1" />
<path d="M1092.2 175.25L1100.1 165.85H1113.6L1105.7 175.25Z" fill="#dcdcdc" stroke="#3b4453" stroke-width="1" />
<path d="M1092.2 170.25L1100.1 160.85H1113.6L1105.7 170.25Z" fill="#dcdcdc" stroke="#3b4453" stroke-width="1" />
<circle cx="1112.5" cy="176.8" r="4.7" fill="#fdd37c"/>
<path d="M1109.4 181.1H1115.6V183.1Q1115.6 185.1 1112.5 185.1Q1109.4 185.1 1109.4 183.1Z" fill="#f6f6f6" />
<path d="M1129.5 180.25L1137.4 170.85H1150.9L1143 180.25Z" fill="#7cc8fb" stroke="#3b4453" stroke-width="1" />
<path d="M1129.5 175.25L1137.4 165.85H1150.9L1143 175.25Z" fill="#dcdcdc" stroke="#3b4453" stroke-width="1" />
<path d="M1129.5 170.25L1137.4 160.85H1150.9L1143 170.25Z" fill="#dcdcdc" stroke="#3b4453" stroke-width="1" />
<path d="M1143.2 184.4L1150 177.9" fill="none" stroke="#f2f2f2" stroke-width="1.5" />
<path d="M1153 175.1L1151.44 180.898L1147.2 176.656Z" fill="#f2f2f2" />
<path d="M1164.4 180.25L1172.3 170.85H1185.8L1177.9 180.25Z" fill="#dcdcdc" stroke="#3b4453" stroke-width="1" />
<path d="M1164.4 175.25L1172.3 165.85H1185.8L1177.9 175.25Z" fill="#dcdcdc" stroke="#3b4453" stroke-width="1" />
<path d="M1164.4 170.25L1172.3 160.85H1185.8L1177.9 170.25Z" fill="#dcdcdc" stroke="#3b4453" stroke-width="1" />
<circle cx="1182.1" cy="177.6" r="5.6" fill="#3b4453"/><circle cx="1182.1" cy="177.6" r="4" fill="#fdd37c"/>
<rect x="1187.8" y="176.7" width="1.8" height="1.8" fill="#fdd37c" />
<rect x="1185.87" y="181.367" width="1.8" height="1.8" fill="#fdd37c" />
<rect x="1181.2" y="183.3" width="1.8" height="1.8" fill="#fdd37c" />
<rect x="1176.53" y="181.367" width="1.8" height="1.8" fill="#fdd37c" />
<rect x="1174.6" y="176.7" width="1.8" height="1.8" fill="#fdd37c" />
<rect x="1176.53" y="172.033" width="1.8" height="1.8" fill="#fdd37c" />
<rect x="1181.2" y="170.1" width="1.8" height="1.8" fill="#fdd37c" />
<rect x="1185.87" y="172.033" width="1.8" height="1.8" fill="#fdd37c" />
<path d="M1200.4 170.25L1208.3 160.85H1221.8L1213.9 170.25Z" fill="#dcdcdc" stroke="#3b4453" stroke-width="1" />
<rect x="1210.8" y="177.4" width="11.2" height="7.2" fill="#fdd37c" />
<path d="M1218.8 177.4V174.3A2.8 2.8 0 0 1 1224.4 174.3V175.8" fill="none" stroke="#fdd37c" stroke-width="2.3" />
<rect x="1215.6" y="179.2" width="1.6" height="3.8" fill="#39414f" />
<path d="M1236.4 180.25L1244.3 170.85H1257.8L1249.9 180.25Z" fill="#dcdcdc" stroke="#3b4453" stroke-width="1" />
<path d="M1236.4 175.25L1244.3 165.85H1257.8L1249.9 175.25Z" fill="#dcdcdc" stroke="#3b4453" stroke-width="1" />
<path d="M1236.4 170.25L1244.3 160.85H1257.8L1249.9 170.25Z" fill="#dcdcdc" stroke="#3b4453" stroke-width="1" />
<g transform="rotate(42 1255 179.5)"><rect x="1250.2" y="176.6" width="10.4" height="3" fill="#f6f6f6"/><rect x="1254.1" y="172.8" width="2.6" height="4" fill="#f6f6f6"/><rect x="1250.2" y="179.9" width="10.4" height="5.6" fill="#f5c760"/></g>
<path d="M1434 85H1451.9L1460.3 93.4V121.8H1434Z" fill="#7cc8fb" />
<path d="M1451.9 85L1460.3 93.4H1451.9Z" fill="#c4e6fd" />
<rect x="1414" y="101.2" width="29.7" height="21.6" fill="#6b7280" />
<path d="M1414.6 101.8H1443.1V122.2H1414.6Z" fill="none" stroke="#d2d2d2" stroke-width="1.2" />
<circle cx="1443.7" cy="122.4" r="10.2" fill="#6b7280" fill-opacity="0.85" stroke="#d2d2d2" stroke-width="1.2"/>
<path d="M1443.1 112.5V122.2H1433.6" fill="none" stroke="#d2d2d2" stroke-width="1" />
<rect x="1412.1" y="121.2" width="3.9" height="3.9" fill="#dcdcdc" />
<rect x="1472.4" y="98.5" width="13.7" height="10.2" fill="#6b7280" />
<path d="M1473 99.1H1485.5V108.10000000000001H1473Z" fill="none" stroke="#d2d2d2" stroke-width="1.1" />
<circle cx="1486.8" cy="108.5" r="4.0" fill="#6b7280" fill-opacity="0.85" stroke="#d2d2d2" stroke-width="1.1"/>
<rect x="1470.9" y="107.2" width="3" height="3" fill="#dcdcdc" />
<rect x="1472.4" y="131.8" width="13.7" height="12.1" fill="#6b7280" />
<path d="M1473 132.4H1485.5V143.3H1473Z" fill="none" stroke="#d2d2d2" stroke-width="1.1" />
<circle cx="1488.9" cy="142.7" r="4.4" fill="#6b7280" fill-opacity="0.85" stroke="#d2d2d2" stroke-width="1.1"/>
<rect x="1470.9" y="142.4" width="3" height="3" fill="#dcdcdc" />
<path d="M1488.40 88.80L1489.66 92.15L1492.93 90.67L1491.45 93.94L1494.80 95.20L1491.45 96.46L1492.93 99.73L1489.66 98.25L1488.40 101.60L1487.14 98.25L1483.87 99.73L1485.35 96.46L1482.00 95.20L1485.35 93.94L1483.87 90.67L1487.14 92.15Z" fill="#fdd37c" />
<g transform="translate(1494.2 127.2) rotate(137.85)"><path d="M2.6 -2.2H0.8Q-1.6 -2.2 -1.6 0Q-1.6 2.2 0.8 2.2H2.6Z" fill="#f0525a"/><rect x="2.6" y="-2.2" width="8.44641" height="4.4" fill="#f8cf72"/><path d="M11.0464 -2.2L15.6464 0L11.0464 2.2Z" fill="#c8c8c8"/><path d="M13.8464 -0.86L15.6464 0L13.8464 0.86Z" fill="#5a5f68"/></g>
<path d="M1470.9 163.4H1479.9L1493 175.9L1483 185.1L1470.9 173Z" fill="#dadada" />
<circle cx="1474.7" cy="167.2" r="1.3" fill="#3b4453"/>
<path d="M1477 170L1486.5 179M1474.8 172.5L1482.5 180" fill="none" stroke="#5a5f68" stroke-width="0.9" stroke-dasharray="2.2 1.2"/>
<g transform="translate(1494.2 163) rotate(137.78)"><path d="M2.6 -2.2H0.8Q-1.6 -2.2 -1.6 0Q-1.6 2.2 0.8 2.2H2.6Z" fill="#f0525a"/><rect x="2.6" y="-2.2" width="7.38355" height="4.4" fill="#f8cf72"/><path d="M9.98355 -2.2L14.5836 0L9.98355 2.2Z" fill="#c8c8c8"/><path d="M12.7836 -0.86L14.5836 0L12.7836 0.86Z" fill="#5a5f68"/></g>
<rect x="1671.8" y="89" width="30.4" height="41.9" fill="#dcdcdc" />
<rect x="1675.3" y="92.2" width="20.6" height="15.3" fill="#3f5870" />
<rect x="1676.4" y="93.3" width="18.4" height="13.1" fill="#86ccfb" />
<path d="M1676.8 115.6H1694.9M1676.8 123.7H1694.9" fill="none" stroke="#5a5f68" stroke-width="1" />
<rect x="1680.1" y="112.9" width="1.8" height="5.4" fill="#5a5f68" />
<rect x="1690.1" y="121" width="1.8" height="5.4" fill="#5a5f68" />
<g transform="translate(1707.1 125.7) rotate(41)"><rect x="-11" y="-9" width="22" height="17.5" fill="#3b4453"/></g>
<g transform="translate(1707.1 125.7) rotate(41) scale(1.0)"><rect x="-9.5" y="0.3" width="19" height="7" fill="#fbd27a"/><path d="M-9.5 0V-5.5Q-9.5 -7.5 -7.5 -7.5H-2.2V-11Q-2.2 -12.4 0 -12.4Q2.2 -12.4 2.2 -11V-7.5H7.5Q9.5 -7.5 9.5 -5.5V0Z" fill="#f4f4f4"/></g>
<path d="M1753.9 101L1747.85 90.52A12.1 12.1 0 0 1 1759.95 90.52Z" fill="#fdbc3c" />
<path d="M1753.9 101L1759.95 90.52A12.1 12.1 0 0 1 1766.00 101.00Z" fill="#fb8a3c" />
<path d="M1753.9 101L1766.00 101.00A12.1 12.1 0 0 1 1759.95 111.48Z" fill="#ea5455" />
<path d="M1753.9 101L1759.95 111.48A12.1 12.1 0 0 1 1747.85 111.48Z" fill="#8b4dfc" />
<path d="M1753.9 101L1747.85 111.48A12.1 12.1 0 0 1 1741.80 101.00Z" fill="#1bb0c9" />
<path d="M1753.9 101L1741.80 101.00A12.1 12.1 0 0 1 1747.85 90.52Z" fill="#4ccb74" />
<rect x="1742" y="124.9" width="24.1" height="1.3" fill="#dcdcdc" />
<rect x="1742" y="129.1" width="24.1" height="2.7" fill="#dcdcdc" />
<rect x="1742" y="134.9" width="24.1" height="4.8" fill="#dcdcdc" />
<rect x="1742" y="143" width="24.1" height="5.9" fill="#dcdcdc" />
<path d="M1742 164.5H1764.9" fill="none" stroke="#dcdcdc" stroke-width="1.1" stroke-dasharray="1.4 1.6"/>
<path d="M1742 168.4H1764.9" fill="none" stroke="#dcdcdc" stroke-width="1.1" stroke-dasharray="3.4 1.3"/>
<path d="M1742 172.4H1764.9" fill="none" stroke="#dcdcdc" stroke-width="1.1" />
<path d="M1742 176.4H1764.9" fill="none" stroke="#dcdcdc" stroke-width="1.1" stroke-dasharray="5 1.4"/>
<path d="M1742 180.2H1764.9" fill="none" stroke="#dcdcdc" stroke-width="1.1" stroke-dasharray="7.2 1.3"/>
<path d="M2060 96.9H2054.8V134.9H2060" fill="none" stroke="#f4f4f4" stroke-width="1.5" />
<path d="M2081.2 134.9H2086.5V114.3" fill="none" stroke="#f4f4f4" stroke-width="1.5" />
<rect x="2063.1" y="101.5" width="15" height="11.2" fill="#4a6a8f" />
<path d="M2063.8 102.2H2077.4V112H2063.8Z" fill="none" stroke="#7cc8fb" stroke-width="1.3" />
<circle cx="2070.3" cy="124.6" r="6.8" fill="#6b7280" stroke="#d2d2d2" stroke-width="1.2"/>
<path d="M2088.00 88.60L2090.04 94.72L2095.29 90.97L2093.34 97.12L2099.79 97.17L2094.60 101.00L2099.79 104.83L2093.34 104.88L2095.29 111.03L2090.04 107.28L2088.00 113.40L2085.96 107.28L2080.71 111.03L2082.66 104.88L2076.21 104.83L2081.40 101.00L2076.21 97.17L2082.66 97.12L2080.71 90.97L2085.96 94.72Z" fill="#fdd37c" />
<rect x="2116.1" y="92.1" width="8.8" height="7.6" fill="#4a6a8f" />
<path d="M2116.7 92.7H2124.3V99.1H2116.7Z" fill="none" stroke="#7cc8fb" stroke-width="1.1" />
<circle cx="2120.5" cy="105.6" r="4" fill="#6b7280" stroke="#d2d2d2" stroke-width="1.1"/>
<path d="M2128 89.7H2131.5V97.4M2131.5 107V112H2128" fill="none" stroke="#f4f4f4" stroke-width="1.4" />
<path d="M2128.6 98.7L2135.6 105.7M2135.6 98.7L2128.6 105.7" fill="none" stroke="#f0525a" stroke-width="2.2" />
<path d="M2117 125.9H2113.7V144.8H2117M2123.6 125.9H2126.9V144.8H2123.6" fill="none" stroke="#f4f4f4" stroke-width="1.4" />
<rect x="2117" y="128.1" width="6.9" height="5.6" fill="#4a6a8f" />
<path d="M2117.6 128.7H2123.3V133.1H2117.6Z" fill="none" stroke="#7cc8fb" stroke-width="1" />
<circle cx="2120.5" cy="139.6" r="3" fill="#6b7280" stroke="#d2d2d2" stroke-width="1"/>
<g transform="translate(2136 138.3) rotate(136.32)"><path d="M2.6 -2.2H0.8Q-1.6 -2.2 -1.6 0Q-1.6 2.2 0.8 2.2H2.6Z" fill="#f0525a"/><rect x="2.6" y="-2.2" width="8.14829" height="4.4" fill="#f8cf72"/><path d="M10.7483 -2.2L15.3483 0L10.7483 2.2Z" fill="#c8c8c8"/><path d="M13.5483 -0.86L15.3483 0L13.5483 0.86Z" fill="#5a5f68"/></g>
<rect x="2106.4" y="155.5" width="35.6" height="32.1" fill="#43566f" />
<path d="M2107.1 156.2H2141.3V186.9H2107.1Z" fill="none" stroke="#6cbdf5" stroke-width="1.4" />
<path d="M2119 162.1H2116V181H2119M2126.1 162.1H2129.2V181H2126.1" fill="none" stroke="#f4f4f4" stroke-width="1.4" />
<rect x="2119" y="164.5" width="6.9" height="5.1" fill="#3f6a5a" />
<path d="M2119.6 165.1H2125.3V169H2119.6Z" fill="none" stroke="#4fd675" stroke-width="1.1" />
<circle cx="2122.4" cy="175.8" r="3" fill="#3f6a5a" stroke="#4fd675" stroke-width="1.1"/>
<path d="M2128.00 172.20L2128.00 183.42L2130.67 181.03L2132.69 185.45L2134.62 184.53L2132.60 180.30L2136.10 180.11Z" fill="#f6f6f6" stroke="#3b4453" stroke-width="0.6" />
<rect x="2179.8" y="107.1" width="42.5" height="9.7" fill="#f8d070" />
<rect x="2182.8" y="107.1" width="1" height="4.2" fill="#8a7a55" />
<rect x="2186.36" y="107.1" width="1" height="2.8" fill="#8a7a55" />
<rect x="2189.92" y="107.1" width="1" height="4.2" fill="#8a7a55" />
<rect x="2193.48" y="107.1" width="1" height="2.8" fill="#8a7a55" />
<rect x="2197.04" y="107.1" width="1" height="4.2" fill="#8a7a55" />
<rect x="2200.6" y="107.1" width="1" height="2.8" fill="#8a7a55" />
<rect x="2204.16" y="107.1" width="1" height="4.2" fill="#8a7a55" />
<rect x="2207.72" y="107.1" width="1" height="2.8" fill="#8a7a55" />
<rect x="2211.28" y="107.1" width="1" height="4.2" fill="#8a7a55" />
<rect x="2214.84" y="107.1" width="1" height="2.8" fill="#8a7a55" />
<rect x="2218.4" y="107.1" width="1" height="4.2" fill="#8a7a55" />
<path d="M2273.4 89L2262.5 95.6L2267.8 96.2L2264.7 100L2273.4 94.7L2269.1 94Z" fill="#f8d070" />
<rect x="2269.1" y="99" width="14.1" height="14.1" fill="#f4f4f4" />
<rect x="2271.4" y="101.9" width="1.6" height="1.5" fill="#1e86e8" />
<rect x="2274.2" y="102" width="6.6" height="1.3" fill="#1e86e8" />
<rect x="2271.4" y="105.3" width="1.6" height="1.5" fill="#1e86e8" />
<rect x="2274.2" y="105.4" width="6.6" height="1.3" fill="#1e86e8" />
<rect x="2271.4" y="108.7" width="1.6" height="1.5" fill="#1e86e8" />
<rect x="2274.2" y="108.8" width="6.6" height="1.3" fill="#1e86e8" />
<path d="M2258.80 96.30L2258.80 110.33L2262.14 107.34L2264.66 112.86L2267.08 111.71L2264.55 106.42L2268.92 106.19Z" fill="#f6f6f6" stroke="#3b4453" stroke-width="0.6" />
<rect x="2266.3" y="128.1" width="12.1" height="11.6" fill="#6fd695" />
<rect x="2261.3" y="131.9" width="12" height="12.5" fill="#3b4453" />
<rect x="2261.8" y="132.4" width="11" height="11.5" fill="#6fd695" />
<path d="M2259.7 125.8H2280.3V146.2H2259.7Z" fill="none" stroke="#4fd675" stroke-width="1.2" stroke-dasharray="2.4 1.5"/>
<path d="M2273.40 136.00L2273.40 148.20L2276.30 145.60L2278.50 150.40L2280.60 149.40L2278.40 144.80L2282.20 144.60Z" fill="#f6f6f6" stroke="#3b4453" stroke-width="0.6" />
<rect x="2262" y="161.1" width="17.1" height="23.8" fill="#dcdcdc" />
<rect x="2265" y="164.3" width="10.9" height="4.3" fill="#666a72" />
<rect x="2265" y="171.1" width="2.5" height="2.5" fill="#666a72" />
<rect x="2265" y="175.3" width="2.5" height="2.5" fill="#666a72" />
<rect x="2265" y="179.5" width="2.5" height="2.5" fill="#666a72" />
<rect x="2269.25" y="171.1" width="2.5" height="2.5" fill="#666a72" />
<rect x="2269.25" y="175.3" width="2.5" height="2.5" fill="#666a72" />
<rect x="2269.25" y="179.5" width="2.5" height="2.5" fill="#666a72" />
<rect x="2273.5" y="171.1" width="2.5" height="2.5" fill="#666a72" />
<rect x="2273.5" y="175.3" width="2.5" height="2.5" fill="#666a72" />
<rect x="2273.5" y="179.5" width="2.5" height="2.5" fill="#666a72" />
<rect x="2314.9" y="93.1" width="33.3" height="36.9" fill="#e0b27b" />
<path d="M2327 90.7V89.2Q2327 87.7 2328.5 87.7H2333.5Q2335 87.7 2335 89.2V90.7H2338Q2339.5 90.7 2339.5 92.5V94.5H2322.7V92.5Q2322.7 90.7 2324.2 90.7Z" fill="#f8f8f8" />
<rect x="2324.9" y="102" width="24" height="28.2" fill="#3b4453" />
<path d="M2325.9 103H2343.4L2353 112.6V135.9H2325.9Z" fill="#dcdcdc" />
<path d="M2343.4 103L2353 112.6H2343.4Z" fill="#f6f6f6" />
<rect x="2378.9" y="89.1" width="18.2" height="20.9" fill="#dcdcdc" />
<path d="M2382 93.6H2394M2382 99.5H2390M2382 105.5H2390" fill="none" stroke="#a0a4aa" stroke-width="1" />
<path d="M2389.1 95.5L2392.4 99L2401.6 108.6L2399.4 109.4L2389.3 99.8Z" fill="#f8f8f8" stroke="#3b4453" stroke-width="0.6" />
<path d="M2403.2 97.9L2402.6 101.6L2393.4 109.4L2391.6 108.2Z" fill="#f8f8f8" stroke="#3b4453" stroke-width="0.6" />
<circle cx="2392.5" cy="110.6" r="2.2" fill="none" stroke="#f8f8f8" stroke-width="1.5"/><circle cx="2400.4" cy="110.6" r="2.2" fill="none" stroke="#f8f8f8" stroke-width="1.5"/>
<path d="M2410 98.2H2417.8L2413.9 102.7Z" fill="#d2d2d2" />
<path d="M2381.8 125H2388.6L2391.2 127.6V145H2381.8Z" fill="#dcdcdc" />
<rect x="2384.9" y="127.7" width="17.2" height="22.4" fill="#3b4453" />
<path d="M2385.9 128.7H2395.6L2401.1 134.2V149.1H2385.9Z" fill="#dcdcdc" />
<path d="M2395.6 128.7L2401.1 134.2H2395.6Z" fill="#f6f6f6" stroke="#3b4453" stroke-width="0.5" />
<path d="M2410 134.1H2417.8L2413.9 138.6Z" fill="#d2d2d2" />
<path d="M2452.8 93.1H2474V108.1H2501V129.1H2452.8Z" fill="#dcdcdc" />
<path d="M104.4 229H227.8L213.3 265H88.9Z" fill="#3b4453" />
<text x="42.5" y="254.1" font-size="17.5" fill="#f2f2f2" textLength="35.5" lengthAdjust="spacingAndGlyphs" >Start</text>
<text x="114.4" y="254.1" font-size="17.5" fill="#f2f2f2" textLength="69.2" lengthAdjust="spacingAndGlyphs" font-weight="bold" >uhouse*</text>
<path d="M197.5 242L208.5 253M208.5 242L197.5 253" fill="none" stroke="#a3a8b3" stroke-width="2.6" />
<path d="M241 247H259M250 238V256" fill="none" stroke="#e0e0e0" stroke-width="2.8" />
<path d="M18 258.7L28.6 235.2" fill="none" stroke="#4a5363" stroke-width="1.4" />
<path d="M275.4 258.7L286.0 235.2" fill="none" stroke="#4a5363" stroke-width="1.4" />
<text x="47" y="294.7" font-size="17.5" fill="#e8e8e8" textLength="3.6" lengthAdjust="spacingAndGlyphs" >[</text>
<text x="53.2" y="292.4" font-size="17.5" fill="#e8e8e8" textLength="10.2" lengthAdjust="spacingAndGlyphs" >−</text>
<text x="66.3" y="294.7" font-size="17.5" fill="#e8e8e8" textLength="3.8" lengthAdjust="spacingAndGlyphs" >]</text>
<text x="72.2" y="294.7" font-size="17.5" fill="#e8e8e8" textLength="113.4" lengthAdjust="spacingAndGlyphs" >[Custom View]</text>
<text x="187.1" y="294.7" font-size="17.5" fill="#e8e8e8" textLength="73.5" lengthAdjust="spacingAndGlyphs" >[Realistic]</text>
<rect x="2464.8" y="290.8" width="15.3" height="5.3" fill="#ececec" />
<path d="M2498.6 284.2H2509.3V294.2" fill="none" stroke="#e4e4e4" stroke-width="2.2" />
<rect x="2495" y="285.3" width="12.1" height="12.6" fill="#ececec" />
<rect x="2498.3" y="288.5" width="5.5" height="6.2" fill="#1c222c" />
<path d="M2526 285.6L2536.8 294.8M2536.8 285.6L2526 294.8" fill="none" stroke="#ececec" stroke-width="3.7" />
<text transform="translate(29.4 971) rotate(-90)" font-size="17.5" fill="#e8e8e8" textLength="199.8" lengthAdjust="spacingAndGlyphs">Layer Properties Manager</text>
<path transform="matrix(385.7 -62.0 99.25 238.1 1348.6 754.4)" d="M1.131 -1H0A1 1 0 0 0 0 1H1.131Z M1.131 -0.527H0A0.527 0.527 0 0 0 0 0.527H1.131" fill="none" stroke="#0057ae" stroke-width="0.0262" stroke-linejoin="miter"/>
<defs><linearGradient id="gz" x1="0" x2="1" y1="0" y2="0"><stop offset="0" stop-color="#36527f"/><stop offset="0.55" stop-color="#3d5f92"/><stop offset="1" stop-color="#5580bd"/></linearGradient><linearGradient id="gy" x1="0" x2="0" y1="0" y2="1"><stop offset="0" stop-color="#3a8f3d"/><stop offset="0.5" stop-color="#49ad4b"/><stop offset="1" stop-color="#2f7a33"/></linearGradient><linearGradient id="gx" x1="0" x2="0" y1="0" y2="1"><stop offset="0" stop-color="#c86464"/><stop offset="0.5" stop-color="#c25c5c"/><stop offset="1" stop-color="#a24848"/></linearGradient></defs>
<g transform="translate(702 1231) rotate(-110.3)"><rect x="0" y="-4.1" width="49.5" height="8.2" rx="3.8" fill="url(#gy)"/></g>
<g transform="translate(705 1232) rotate(-9.8)"><path d="M0 -4.1H68.5L72 -1V2L68.5 4.1H0Z" fill="url(#gx)"/></g>
<rect x="700" y="1172.8" width="8.1" height="61.1" rx="2.2" fill="url(#gz)"/>
<path d="M700.2 1175.5Q700 1173 704 1172.6Q708 1173 707.9 1175.5Q706 1178 703.6 1178Q701 1177.6 700.2 1175.5Z" fill="#9cc8f4" />
<path d="M702.6 1176.5L704.2 1173L705.2 1176.5Z" fill="#e4f2ff" />
<path d="M700 1150.2H718L700.4 1168.4H718" fill="none" stroke="#0a6cff" stroke-width="1.15" stroke-linejoin="bevel"/>
<path d="M681.2 1164.4L690.3 1172.4L699 1164.4M690.3 1172.4V1181.7" fill="none" stroke="#18ae18" stroke-width="1.15" />
<path d="M769.1 1195.1L786.9 1212.9M786.9 1196.3L769.1 1213.7" fill="none" stroke="#e02424" stroke-width="1.15" />
<path d="M1812 1048.8L1950.1 1027.4" fill="none" stroke="#f07878" stroke-width="1.1" />
<path d="M1834.3 985.1L1869.9 1069.8" fill="none" stroke="#7cfc7c" stroke-width="1.1" />
<path d="M1857.5 967V1078.8" fill="none" stroke="#7b7bff" stroke-width="1.2" />
<rect x="1853" y="1037" width="9.2" height="9" fill="#212830" />
<path d="M1853.6 1037.6H1861.6V1045.4H1853.6Z" fill="none" stroke="#ffffff" stroke-width="1.2" />
<radialGradient id="vg" cx="0.5" cy="0.5" r="0.5"><stop offset="0" stop-color="#2e353f"/><stop offset="0.7" stop-color="#262d36"/><stop offset="1" stop-color="#212830" stop-opacity="0"/></radialGradient>
<ellipse cx="2431" cy="470" rx="60" ry="36" fill="url(#vg)"/>
<path d="M2334.4 466.5A94.7 64.5 0 1 0 2523.8 466.5A94.7 64.5 0 1 0 2334.4 466.5ZM2355 464A74 49.7 0 1 1 2503 464A74 49.7 0 1 1 2355 464Z" fill="#434a55" fill-rule="evenodd"/>
<linearGradient id="cf" x1="0" x2="0" y1="0" y2="1"><stop offset="0" stop-color="#a9adb3"/><stop offset="1" stop-color="#9b9fa5"/></linearGradient>
<path d="M2385.4 383.5L2400.5 424.9L2402.6 483.5L2389.4 441.1Z" fill="#8f9399" />
<path d="M2385.4 383.5L2455.1 373.4L2475.3 413.8L2400.5 424.9Z" fill="#adb1b7" />
<path d="M2400.5 424.9L2475.3 413.8L2471.3 469.4L2402.6 483.5Z" fill="url(#cf)" />
<path d="M2412.7 416.2L2461.2 409L2462.2 426L2415 433.5Z" fill="#a6aab8" opacity="0.75"/>
<path d="M2385.4 383.5L2400.5 424.9L2475.3 413.8" fill="none" stroke="#6a707a" stroke-width="0.7" />
<path d="M2400.5 424.9L2402.6 483.5" fill="none" stroke="#7a808a" stroke-width="0.7" stroke-dasharray="3 2"/>
<text transform="translate(2428.4 403.2) rotate(-8.5) skewX(-6)" font-size="14.5" font-weight="bold" fill="#4a5260" text-anchor="middle" textLength="31" lengthAdjust="spacingAndGlyphs">TOP</text>
<text transform="translate(2438.6 455.4) rotate(-8.5) skewX(-3)" font-size="17" font-weight="bold" fill="#4a5260" text-anchor="middle" textLength="51" lengthAdjust="spacingAndGlyphs">FRONT</text>
<text transform="translate(2392.8 432) rotate(70) skewX(10)" font-size="6.5" font-weight="bold" fill="#4a5260" text-anchor="middle">LEFT</text>
<text transform="translate(2340.5 482.5) rotate(-17) skewX(-12)" font-size="25" font-weight="bold" fill="#c9c9c9" text-anchor="middle" textLength="33" lengthAdjust="spacingAndGlyphs">W</text>
<text transform="translate(2512 453.5) rotate(-17) skewX(-14)" font-size="24" font-weight="bold" fill="#c9c9c9" text-anchor="middle" textLength="23" lengthAdjust="spacingAndGlyphs">E</text>
<text transform="translate(2455.5 534.5) rotate(-8) skewX(-4)" font-size="27" font-weight="bold" fill="#c9c9c9" text-anchor="middle" textLength="27" lengthAdjust="spacingAndGlyphs">S</text>
<rect x="2395.5" y="557.9" width="68.3" height="24.3" rx="4.5" fill="#8f91a4"/>
<rect x="2397.5" y="559.9" width="64.3" height="20.3" rx="3.2" fill="#a2a4b6"/>
<text x="2401.6" y="576.2" font-size="17" fill="#5c606c" textLength="34.6" lengthAdjust="spacingAndGlyphs" >WCS</text>
<path d="M2445 567.2H2456.6L2450.8 574.2Z" fill="#b4b6c6" stroke="#888a9c" stroke-width="1" />
<rect x="2503" y="616" width="46" height="310.8" rx="3.5" fill="#595f69"/>
<circle cx="2540" cy="622.8" r="4.6" fill="#666c76" stroke="#50565f" stroke-width="0.8"/>
<path d="M2537.7 620.5L2542.3 625.1M2542.3 620.5L2537.7 625.1" fill="none" stroke="#50565f" stroke-width="1" />
<circle cx="2540" cy="917.8" r="4.6" fill="#666c76" stroke="#50565f" stroke-width="0.8"/>
<path d="M2536.8 917.8H2543.2L2540 921Z" fill="#50565f" />
<path d="M2536.8 916.5H2543.2" fill="none" stroke="#50565f" stroke-width="0.9" />
<path d="M2525 641H2538Q2542 641 2542 645V657A16.5 16.5 0 1 1 2525 641Z" fill="none" stroke="#4b515b" stroke-width="1.6" />
<circle cx="2525.5" cy="657" r="8" fill="none" stroke="#4b515b" stroke-width="1.6"/>
<circle cx="2525.5" cy="657" r="3.6" fill="#4b515b" opacity="0.5"/>
<path d="M2519.5 662.5L2514.5 669M2531.5 662.5L2536.5 669" fill="none" stroke="#4b515b" stroke-width="1.4" />
<path d="M2522.6 685.3H2530.4L2526.5 689.8Z" fill="#4b515b" />
<path d="M2506 697.5H2546" fill="none" stroke="#525862" stroke-width="0.8" />
<path d="M2509 723Q2512 722 2515.5 727.5L2518 731V709.5Q2519.5 706.5 2521 709.5V721.5V706.5Q2522.8 703.5 2524.5 706.5V721V708Q2526.3 705 2528 708V722V712.5Q2529.8 710 2531.5 712.5V726Q2531.5 734 2527 737.5H2517Q2513 733 2509 723Z" fill="none" stroke="#4b515b" stroke-width="1.6" stroke-linejoin="round"/>
<path d="M2531.5 722Q2536 713 2541.5 713Q2541 720 2535 729Q2532 735 2527 737.5" fill="none" stroke="#4b515b" stroke-width="1.6" />
<path d="M2509 747L2531 769M2531 747L2509 769" fill="none" stroke="#4b515b" stroke-width="1.6" />
<path d="M2508.4 752V746.4H2514M2526 746.4H2531.6V752M2508.4 764V769.6H2514" fill="none" stroke="#4b515b" stroke-width="1.6" />
<circle cx="2532.5" cy="768.5" r="6.6" fill="#595f69" stroke="#4b515b" stroke-width="1.6"/>
<path d="M2537.5 773.5L2543 779" fill="none" stroke="#4b515b" stroke-width="3" />
<path d="M2522.6 790.3H2530.4L2526.5 794.8Z" fill="#4b515b" />
<path d="M2525.5 803.5L2532 811.5H2528.6V833Q2528.6 835 2526.6 835H2524.4Q2522.4 835 2522.4 833V811.5H2519Z" fill="none" stroke="#4b515b" stroke-width="1.5" stroke-linejoin="round"/>
<ellipse cx="2525.5" cy="822.5" rx="16.5" ry="5.6" fill="none" stroke="#4b515b" stroke-width="1.5"/>
<path d="M2511.5 828L2517.5 822.5V833.5Z" fill="#4b515b" />
<path d="M2522.6 847.3H2530.4L2526.5 851.8Z" fill="#4b515b" />
<path d="M2506 859.5H2546" fill="none" stroke="#525862" stroke-width="0.8" />
<path d="M2508.5 866.6H2517.0V875.5H2508.5Z" fill="none" stroke="#4b515b" stroke-width="1.4" />
<path d="M2520.5 866.6H2529.0V875.5H2520.5Z" fill="none" stroke="#4b515b" stroke-width="1.4" />
<path d="M2532.5 866.6H2541.0V875.5H2532.5Z" fill="none" stroke="#4b515b" stroke-width="1.4" />
<path d="M2508.5 880H2532.5V899.5H2508.5Z" fill="none" stroke="#4b515b" stroke-width="1.5" />
<path d="M2516 884L2526 890L2516 896Z" fill="#4b515b" />
<path d="M568.1 1286.5H602V1474H565.1V1289.5Q565.1 1286.5 568.1 1286.5Z" fill="#2a303d" />
<rect x="600.6" y="1286.5" width="1.6" height="187.5" fill="#1d232d" />
<rect x="602" y="1287.4" width="1424" height="154.6" fill="#98999b" />
<path d="M602.5 1443.8H2026V1470.8Q2026 1473.8 2023 1473.8H602.5Z" fill="#bfc0c2" />
<rect x="602" y="1441.9" width="1424" height="1.9" fill="#141a24" />
<text x="606.3" y="1318" font-size="18.4" fill="#000000" textLength="989.6" lengthAdjust="spacingAndGlyphs" font-family='"Liberation Mono", monospace' stroke="#000" stroke-width="0.3">Specify first point on Section plane by [Object/Zaxis/View/XY/YZ/ZX/3points] &lt;3points&gt;: XY</text>
<text x="606.3" y="1341.1" font-size="18.4" fill="#000000" textLength="527.787" lengthAdjust="spacingAndGlyphs" font-family='"Liberation Mono", monospace' stroke="#000" stroke-width="0.3">Specify a point on the XY-plane &lt;0,0,0&gt;: 0,0,1.5</text>
<text x="606.3" y="1364.2" font-size="18.4" fill="#000000" textLength="87.9644" lengthAdjust="spacingAndGlyphs" font-family='"Liberation Mono", monospace' stroke="#000" stroke-width="0.3">Command:</text>
<text x="606.3" y="1387.3" font-size="18.4" fill="#000000" textLength="87.9644" lengthAdjust="spacingAndGlyphs" font-family='"Liberation Mono", monospace' stroke="#000" stroke-width="0.3">Command:</text>
<text x="606.3" y="1410.4" font-size="18.4" fill="#000000" textLength="87.9644" lengthAdjust="spacingAndGlyphs" font-family='"Liberation Mono", monospace' stroke="#000" stroke-width="0.3">Command:</text>
<text x="606.3" y="1433.5" font-size="18.4" fill="#000000" textLength="87.9644" lengthAdjust="spacingAndGlyphs" font-family='"Liberation Mono", monospace' stroke="#000" stroke-width="0.3">Command:</text>
<text x="657.8" y="1464" font-size="18.4" fill="#636466" textLength="152.5" lengthAdjust="spacingAndGlyphs" font-style="italic" font-family='"Liberation Mono", monospace' >Type a command</text>
<rect x="571" y="1293.9" width="1.6" height="1.5" fill="#c4c6ca" />
<rect x="575.25" y="1293.9" width="1.6" height="1.5" fill="#c4c6ca" />
<rect x="579.5" y="1293.9" width="1.6" height="1.5" fill="#c4c6ca" />
<rect x="583.75" y="1293.9" width="1.6" height="1.5" fill="#c4c6ca" />
<rect x="588" y="1293.9" width="1.6" height="1.5" fill="#c4c6ca" />
<rect x="592.25" y="1293.9" width="1.6" height="1.5" fill="#c4c6ca" />
<rect x="596.5" y="1293.9" width="1.6" height="1.5" fill="#c4c6ca" />
<path d="M577 1315.6L588.8 1326.6M588.8 1315.6L577 1326.6" fill="none" stroke="#c2c2c4" stroke-width="2.6" />
<path d="M574.2 1365L585.5 1354" fill="none" stroke="#b8b8ba" stroke-width="3.6" stroke-linecap="round"/>
<path d="M584.6 1347.2a6 6 0 1 0 8.6 7.2l-4.6 1.6l-3.4-3.2z" fill="#b8b8ba" />
<rect x="609.2" y="1451.4" width="23.6" height="17.3" fill="#58595b" />
<rect x="610.4" y="1455.6" width="21.2" height="11.9" fill="#c9c9cb" />
<rect x="611.2" y="1452.8" width="1.6" height="1.4" fill="#d8d8d8" />
<path d="M612.5 1458.6l4 2.1l-4 2.1M617.8 1464.3h4.4" fill="none" stroke="#4e4f52" stroke-width="1.1" />
<path d="M636.1 1457.2H647.9L642 1462.9Z" fill="#58595b" />
<path d="M2009.3 1461.7H2020.6L2014.95 1456.1Z" fill="#4e4e50" />
<path d="M32.3 1479.9H122.1L107 1515.9H17.1Z" fill="#3b4453" />
<text x="42.9" y="1506" font-size="18" fill="#f2f2f2" textLength="53.1" lengthAdjust="spacingAndGlyphs" font-weight="bold" >Model</text>
<text x="133.2" y="1505.7" font-size="17.5" fill="#e8e8e8" textLength="18" lengthAdjust="spacingAndGlyphs" >a3</text>
<text x="188.7" y="1505.7" font-size="17.5" fill="#e8e8e8" textLength="60.8" lengthAdjust="spacingAndGlyphs" >Layout1</text>
<path d="M289 1498H307.2M298.1 1489.2V1506.8" fill="none" stroke="#e6e6e6" stroke-width="2.8" />
<path d="M165.3 1509.8L175.70000000000002 1486.3" fill="none" stroke="#4a5363" stroke-width="1.4" />
<path d="M264.3 1509.8L274.7 1486.3" fill="none" stroke="#4a5363" stroke-width="1.4" />
<path d="M323.3 1509.8L333.7 1486.3" fill="none" stroke="#4a5363" stroke-width="1.4" />
<rect x="1604" y="1484" width="72.1" height="36" fill="#3b4453" />
<rect x="1682" y="1484" width="96.1" height="36" fill="#3b4453" />
<rect x="1784.1" y="1484" width="36" height="36" fill="#3b4453" />
<rect x="1822" y="1484" width="156" height="36" fill="#3b4453" />
<rect x="1980.5" y="1484" width="95.5" height="36" fill="#3b4453" />
<rect x="2082.5" y="1484" width="157.6" height="36" fill="#3b4453" />
<rect x="2246.2" y="1484" width="59.7" height="36" fill="#3b4453" />
<rect x="2308.1" y="1484" width="35.9" height="36" fill="#3b4453" />
<rect x="2350.1" y="1484" width="35.8" height="36" fill="#3b4453" />
<rect x="2390.1" y="1484" width="83.8" height="36" fill="#3b4453" />
<rect x="2478.1" y="1484" width="71.7" height="36" fill="#3b4453" />
<rect x="1981.1" y="1485" width="34" height="34" fill="#5f8fc5" />
<rect x="2017" y="1485" width="34.1" height="34" fill="#5f8fc5" />
<rect x="2082.9" y="1485" width="34.1" height="34" fill="#5f8fc5" />
<text x="1610" y="1509" font-size="18" fill="#f2f2f2" textLength="61.2" lengthAdjust="spacingAndGlyphs" >MODEL</text>
<path d="M1693.6 1490V1513.1M1699.9 1490V1513.1M1705.9 1490V1513.1M1688 1495H1711.1M1688 1501.5H1711.1M1688 1507.8H1711.1" fill="none" stroke="#e2e2e2" stroke-width="1.2" />
<rect x="1726.8" y="1493.1" width="3" height="3" fill="#e2e2e2" />
<rect x="1726.8" y="1500" width="3" height="3" fill="#e2e2e2" />
<rect x="1726.8" y="1507" width="3" height="3" fill="#e2e2e2" />
<rect x="1733.9" y="1493.1" width="3" height="3" fill="#e2e2e2" />
<rect x="1733.9" y="1500" width="3" height="3" fill="#e2e2e2" />
<rect x="1733.9" y="1507" width="3" height="3" fill="#e2e2e2" />
<rect x="1741.1" y="1493.1" width="3" height="3" fill="#e2e2e2" />
<rect x="1741.1" y="1500" width="3" height="3" fill="#e2e2e2" />
<rect x="1741.1" y="1507" width="3" height="3" fill="#e2e2e2" />
<path d="M1759.8 1499.3H1772L1765.9 1505.3Z" fill="#e2e2e2" />
<path d="M1790.2 1498.7H1800.6M1795.4 1493.5V1503.9" fill="none" stroke="#e2e2e2" stroke-width="1.3" />
<rect x="1798.9" y="1505" width="15.2" height="6.2" fill="#e2e2e2" />
<rect x="1800.6" y="1506.4" width="1.7" height="3.4" fill="#3b4453" />
<path d="M1828.2 1490V1513.2H1852.2M1828.2 1506.8H1835.3V1513.2" fill="none" stroke="#e2e2e2" stroke-width="1.3" />
<circle cx="1873.7" cy="1502.5" r="9.1" fill="none" stroke="#e2e2e2" stroke-width="1.3"/>
<path d="M1888.1 1502.5H1873.7L1884 1492.2" fill="none" stroke="#e2e2e2" stroke-width="1.3" />
<path d="M1900 1499.3H1912.1L1906.05 1505.3Z" fill="#e2e2e2" />
<path d="M1927.1 1492.2L1944.9 1510" fill="none" stroke="#e0605a" stroke-width="1.2" />
<path d="M1936.4 1490V1512.2" fill="none" stroke="#5fd06a" stroke-width="1.3" />
<rect x="1934.2" y="1499.3" width="4.2" height="4.2" fill="#f4f4f4" />
<rect x="1935.3" y="1500.4" width="2" height="2" fill="#2a313d" />
<path d="M1959.9 1499.3H1972L1965.95 1505.3Z" fill="#e2e2e2" />
<path d="M2010.1 1510.6H1986.1L2004 1493.1" fill="none" stroke="#ffffff" stroke-width="1.5" />
<rect x="1992.9" y="1500.1" width="4" height="4" fill="#ffffff" />
<path d="M2029 1494.2H2045.1V1513H2025.9V1496.8" fill="none" stroke="#ffffff" stroke-width="1.5" />
<path d="M2022.8 1491.1H2028.3V1496.1H2022.8Z" fill="none" stroke="#ffffff" stroke-width="1.4" />
<path d="M2057.9 1499.3H2070L2063.95 1505.3Z" fill="#e2e2e2" />
<path d="M2098.50 1489.90L2102.37 1500.78L2101.16 1501.51L2101.16 1504.18L2104.07 1505.14L2109.14 1514.10L2100.92 1510.71L2098.50 1508.29L2096.08 1510.71L2087.86 1514.10L2092.93 1505.14L2095.84 1504.18L2095.84 1501.51L2094.63 1500.78Z" fill="#ffffff" />
<circle cx="2107.4" cy="1495.5" r="4" fill="none" stroke="#ffffff" stroke-width="1.3"/>
<path d="M2134.50 1489.90L2138.37 1500.78L2137.16 1501.51L2137.16 1504.18L2140.07 1505.14L2145.14 1514.10L2136.92 1510.71L2134.50 1508.29L2132.08 1510.71L2123.86 1514.10L2128.93 1505.14L2131.84 1504.18L2131.84 1501.51L2130.63 1500.78Z" fill="#dedede" />
<path d="M2145.8 1490.1L2139.3 1495.9L2142.2 1496.7L2140 1502L2147 1496.2L2144.1 1495.5Z" fill="#dedede" />
<path d="M2171.50 1489.90L2175.37 1500.78L2174.16 1501.51L2174.16 1504.18L2177.07 1505.14L2182.14 1514.10L2173.92 1510.71L2171.50 1508.29L2169.08 1510.71L2160.86 1514.10L2165.93 1505.14L2168.84 1504.18L2168.84 1501.51L2167.63 1500.78Z" fill="#dedede" />
<text x="2198.6" y="1509.2" font-size="18" fill="#f2f2f2" textLength="16.3" lengthAdjust="spacingAndGlyphs" >1:1</text>
<path d="M2221.9 1499.3H2234L2227.95 1505.3Z" fill="#e2e2e2" />
<path d="M2276.13 1499.34L2276.13 1504.46L2272.43 1504.75L2272.00 1505.77L2274.42 1508.59L2270.79 1512.22L2267.97 1509.80L2266.95 1510.23L2266.66 1513.93L2261.54 1513.93L2261.25 1510.23L2260.23 1509.80L2257.41 1512.22L2253.78 1508.59L2256.20 1505.77L2255.77 1504.75L2252.07 1504.46L2252.07 1499.34L2255.77 1499.05L2256.20 1498.03L2253.78 1495.21L2257.41 1491.58L2260.23 1494.00L2261.25 1493.57L2261.54 1489.87L2266.66 1489.87L2266.95 1493.57L2267.97 1494.00L2270.79 1491.58L2274.42 1495.21L2272.00 1498.03L2272.43 1499.05ZM2268.2999999999997 1501.9A4.2 4.2 0 1 0 2259.9 1501.9A4.2 4.2 0 1 0 2268.2999999999997 1501.9Z" fill="#e2e2e2" fill-rule="evenodd"/>
<path d="M2288 1499.3H2300.1L2294.05 1505.3Z" fill="#e2e2e2" />
<path d="M2313.9 1501.6H2336.9M2325.4 1490.1V1513.1" fill="none" stroke="#e2e2e2" stroke-width="3.2" />
<path d="M2356.7 1490.9H2364.8V1498.8H2356.7Z" fill="none" stroke="#e2e2e2" stroke-width="1.3" />
<circle cx="2374.6" cy="1500.7" r="4.9" fill="none" stroke="#e2e2e2" stroke-width="1.3"/>
<path d="M2360.6 1513L2365.4 1506L2370.3 1513Z" fill="none" stroke="#e2e2e2" stroke-width="1.3" />
<path d="M2393.9 1484H2416L2423.3 1491V1515.7H2393.9Z" fill="#3266a8" />
<path d="M2416 1484L2423.3 1491H2416Z" fill="#7fa8d8" />
<path d="M2393.9 1504.1H2411L2415 1507L2411 1515.7H2393.9Z" fill="#f3b21b" />
<path d="M2393.9 1491.4H2418M2401.6 1484V1504" fill="none" stroke="#cfe3f7" stroke-width="1.2" />
<circle cx="2401.6" cy="1491.4" r="2.6" fill="#3266a8" stroke="#e8f2fc" stroke-width="1.2"/>
<path d="M2408.6 1510.6L2416 1516.6L2427.6 1505" fill="none" stroke="#3fae4c" stroke-width="3.4" />
<path d="M2446.4 1493.5A9.6 9.6 0 1 1 2459.5 1508" fill="none" stroke="#e2e2e2" stroke-width="1.4" />
<path d="M2443.4 1491.6L2446 1497.5L2450.4 1492.6Z" fill="#e2e2e2" />
<path d="M2454 1494V1501.4H2459" fill="none" stroke="#e2e2e2" stroke-width="1.3" />
<path d="M2440 1500.9H2447.6L2451.6 1504.6V1513.5H2440Z" fill="#f4f4f4" />
<rect x="2441" y="1502" width="9.6" height="6" fill="#3266a8" />
<path d="M2441 1509.5L2450.6 1511.5V1512.5H2441Z" fill="#f3b21b" />
<path d="M2441 1504.6H2450M2444 1502V1508" fill="none" stroke="#e8f2fc" stroke-width="0.8" />
<circle cx="2458.5" cy="1509.6" r="5.3" fill="#58b0ee"/>
<rect x="2457.8" y="1508.6" width="1.5" height="4.2" fill="#ffffff" />
<rect x="2457.8" y="1506.2" width="1.5" height="1.5" fill="#ffffff" />
<path d="M2484.9 1493.8H2507V1509.3H2484.9Z" fill="none" stroke="#e2e2e2" stroke-width="1.3" />
<path d="M2498.5 1500.2L2503.8 1495.6M2493.4 1503L2488.2 1507.6" fill="none" stroke="#e2e2e2" stroke-width="1.2" />
<path d="M2500.2 1495.2H2504.2V1499.2M2487.8 1504V1508H2491.8" fill="none" stroke="#e2e2e2" stroke-width="1.2" />
<rect x="2520.2" y="1491.2" width="23.8" height="3.1" fill="#e6e6e6" />
<rect x="2520.2" y="1500" width="23.8" height="3.1" fill="#e6e6e6" />
<rect x="2520.2" y="1508.8" width="23.8" height="3.1" fill="#e6e6e6" />
<rect x="0" y="0" width="2556" height="1.2" fill="#1a9fdf" />
<rect x="0" y="0" width="1.1" height="1528" fill="#1a9fdf" />
<rect x="2554.75" y="0" width="1.25" height="1528" fill="#1a9fdf" />
<rect x="0" y="1526.8" width="2556" height="1.2" fill="#1a9fdf" />
</svg>
</body></html>
